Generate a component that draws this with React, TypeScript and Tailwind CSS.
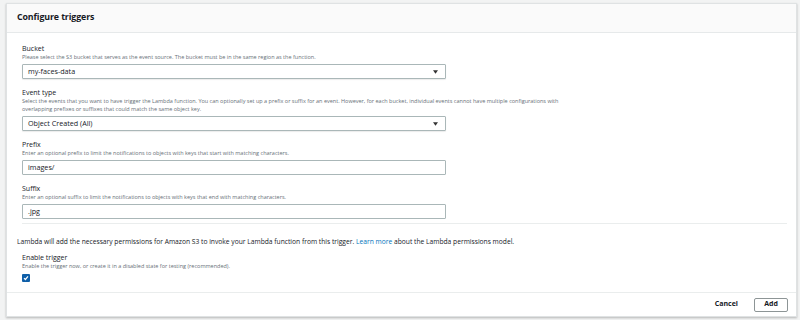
import React from 'react';

const font = { fontFamily: '"Open Sans", "Liberation Sans", sans-serif' };

const Field: React.FC<{ label: string; desc: React.ReactNode; children: React.ReactNode }> = ({
  label,
  desc,
  children,
}) => (
  <div className="flex flex-col">
    <div className="text-[7px] leading-[8px] text-[#16191f]">{label}</div>
    <div className="text-[5.5px] leading-[8px] text-[#687078]">{desc}</div>
    <div className="mt-[3px] w-[424px]">{children}</div>
  </div>
);

const Select: React.FC<{ value: string }> = ({ value }) => (
  <div className="flex h-[15px] items-center justify-between rounded-[1px] border border-[#aab7b8] bg-white pl-[5px] pr-[7px] shadow-[0_1px_1px_rgba(0,0,0,0.08)]">
    <span className="text-[7.2px] text-[#16191f]">{value}</span>
    <svg width="5" height="4" viewBox="0 0 5 4">
      <path d="M0 0.3 H5 L2.5 3.8 Z" fill="#333" />
    </svg>
  </div>
);

const Input: React.FC<{ value: string }> = ({ value }) => (
  <div className="flex h-[15px] items-center rounded-[1px] border border-[#aab7b8] bg-white pl-[5px]">
    <span className="text-[7.2px] text-[#16191f]">{value}</span>
  </div>
);

export default function App() {
  return (
    <div className="h-[320px] w-[800px] bg-[#f2f3f3] pl-[6px] pr-[3px] pt-[3px]" style={font}>
      <div className="flex h-[314px] flex-col border border-[#dfe2e3] bg-white shadow-[0_1px_2px_rgba(0,0,0,0.25)]">
        <div className="flex h-[29px] items-center border-b border-[#e6e9ea] bg-[#fafafa] pl-[10px]">
          <h2 className="text-[8.8px] font-bold tracking-[-0.1px] text-[#16191f]">Configure triggers</h2>
        </div>

        <div className="ml-[15px] mr-[9px] flex flex-col gap-[10px] border-b border-[#eaeded] pb-[4px] pt-[12px]">
          <Field
            label="Bucket"
            desc="Please select the S3 bucket that serves as the event source. The bucket must be in the same region as the function."
          >
            <Select value="my-faces-data" />
          </Field>
          <Field
            label="Event type"
            desc={
              <>
                Select the events that you want to have trigger the Lambda function. You can optionally set up a prefix or
                suffix for an event. However, for each bucket, individual events cannot have multiple configurations with
                <br />
                overlapping prefixes or suffixes that could match the same object key.
              </>
            }
          >
            <Select value="Object Created (All)" />
          </Field>
          <Field
            label="Prefix"
            desc="Enter an optional prefix to limit the notifications to objects with keys that start with matching characters."
          >
            <Input value="images/" />
          </Field>
          <Field
            label="Suffix"
            desc="Enter an optional suffix to limit the notifications to objects with keys that end with matching characters."
          >
            <Input value=".jpg" />
          </Field>
        </div>

        <div className="pl-[10px] pt-[13px] text-[6.7px] leading-[10px] text-[#16191f]">
          Lambda will add the necessary permissions for Amazon S3 to invoke your Lambda function from this trigger.{' '}
          <span className="text-[#0073bb]">Learn more</span> about the Lambda permissions model.
        </div>

        <div className="ml-[15px] flex flex-col pt-[7px]">
          <div className="text-[7px] leading-[8px] text-[#16191f]">Enable trigger</div>
          <div className="text-[5.5px] leading-[8px] text-[#687078]">
            Enable the trigger now, or create it in a disabled state for testing (recommended).
          </div>
          <div className="mt-[4px] flex h-[8px] w-[8px] items-center justify-center rounded-[1px] bg-[#0f5fa8]">
            <svg width="6" height="6" viewBox="0 0 6 6" fill="none">
              <path d="M1 3.1 L2.4 4.5 L5 1.4" stroke="white" strokeWidth="1.2" />
            </svg>
          </div>
        </div>

        <div className="mt-[10px] flex flex-1 items-center justify-end gap-[16px] border-t border-[#eaeded] pr-[8px]">
          <button className="text-[7px] font-bold text-[#16191f]">Cancel</button>
          <button className="flex h-[14px] w-[34px] items-center justify-center rounded-[2px] border border-[#8d9596] bg-white text-[7px] font-bold text-[#16191f]">
            Add
          </button>
        </div>
      </div>
    </div>
  );
}
